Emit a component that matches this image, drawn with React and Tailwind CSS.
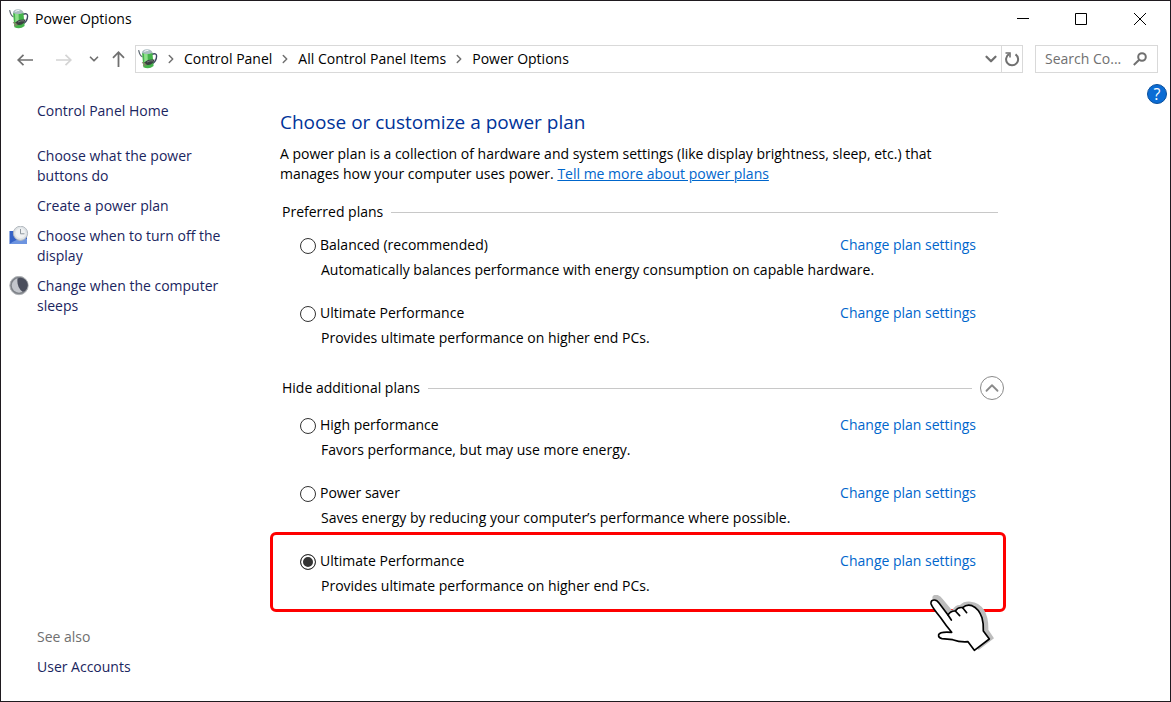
import { useState } from "react";
import { ArrowLeft, ArrowRight, ArrowUp, ChevronDown, ChevronRight, ChevronUp } from "lucide-react";

const preferredPlans = [
  {
    id: "balanced",
    name: "Balanced (recommended)",
    description: "Automatically balances performance with energy consumption on capable hardware.",
  },
  {
    id: "ultimate",
    name: "Ultimate Performance",
    description: "Provides ultimate performance on higher end PCs.",
  },
];

const additionalPlans = [
  {
    id: "high",
    name: "High performance",
    description: "Favors performance, but may use more energy.",
  },
  {
    id: "saver",
    name: "Power saver",
    description: "Saves energy by reducing your computer’s performance where possible.",
  },
  {
    id: "ultimate-2",
    name: "Ultimate Performance",
    description: "Provides ultimate performance on higher end PCs.",
    highlighted: true,
  },
];

const crumbs = ["Control Panel", "All Control Panel Items", "Power Options"];

function PowerIcon() {
  return (
    <svg viewBox="0 0 20 20" className="h-5 w-5 shrink-0" aria-hidden="true">
      <path d="M0.6 1.2 L1.6 4.6 Q2.5 7 4.5 8" stroke="#5b6670" strokeWidth="1.2" fill="none" />
      <path d="M13.5 5.4 Q18.6 3.6 18.6 7 Q18.4 12 14.8 14.5" stroke="#3d4660" strokeWidth="1.4" fill="none" />
      <path d="M4 3.6 Q9 5.6 14.4 3.6 L15.6 17 Q11 20.8 5.4 18.2 Z" fill="#45b34c" />
      <path d="M6 4.8 L9.6 5 L9.8 12 L6.4 13.5 Z" fill="#8ee08a" />
      <path d="M3.8 4 Q4.4 0.3 9 0.3 Q13.8 0.3 14.5 4 Q9 6 3.8 4 Z" fill="#a9bcc0" />
      <path d="M6.4 2.6 Q8 1.2 10.4 1.6" stroke="#eef4f4" strokeWidth="1.1" fill="none" />
      <path d="M6 14 Q9 10 16.6 10.6 Q15.4 15.6 10.4 16 Q7 16.2 6 14 Z" fill="#3a4140" />
      <path d="M9 13 Q12 11.4 15 11.8" stroke="#7d8784" strokeWidth="0.8" fill="none" />
      <path d="M4 13.4 L7.6 15 M5 16.6 L8.4 15.8" stroke="#8d8468" strokeWidth="1.1" />
    </svg>
  );
}

function DisplayIcon() {
  return (
    <svg viewBox="0 0 20 20" className="h-5 w-5 shrink-0" aria-hidden="true">
      <path d="M0.5 5 H18 V18 H0.5 Z" fill="#3562c6" />
      <path d="M0.5 18 Q8 12 18 13 V18 Z" fill="#6d94e0" />
      <circle cx="11.5" cy="7.3" r="7.1" fill="#dfe3e6" stroke="#b2b8be" />
      <circle cx="11.5" cy="7.3" r="5" fill="#eff1f2" />
      <path d="M11.5 3 V7.8 H15.5" stroke="#8f979e" fill="none" />
    </svg>
  );
}

function SleepIcon() {
  return (
    <svg viewBox="0 0 20 20" className="h-5 w-5 shrink-0" aria-hidden="true">
      <circle cx="10" cy="9.5" r="9.2" fill="#7f8389" stroke="#b1b4b8" />
      <circle cx="10" cy="9.5" r="7.2" fill="#c3c6cc" />
      <path d="M8.5 2.6 A7.1 7.1 0 1 1 13.6 15.8 Q7.5 11 8.5 2.6 Z" fill="#4a4e5c" />
    </svg>
  );
}

function HandPointer() {
  return (
    <svg viewBox="27 30 195 171" className="absolute top-11 -right-4.5 h-[57px] w-[65px]" aria-hidden="true">
      <path
        d="M38 42 Q34 30 48 29 Q60 30 68 42 L96 76 Q108 58 120 60 Q132 48 152 50 Q176 52 192 74 Q206 96 205 134 L222 160 L176 195 L160 180 Z"
        fill="#bdbdbd"
      />
      <path
        d="M33 56 Q32 45 43 45 Q51 45 57 54 L84 90 Q92 77 106 78 Q114 65 128 68 Q140 57 156 62 Q176 70 186 98 Q191 116 190 138 L208 162 L163 196 L144 170 Q120 172 98 164 L66 161 Q54 158 56 149 Q60 139 95 142 Q80 124 62 98 Q36 66 33 56 Z"
        fill="#fff"
        stroke="#000"
        strokeWidth="5"
        strokeLinejoin="round"
      />
      <path
        d="M84 90 L94 105 M106 78 L119 92 M128 68 L140 83"
        stroke="#000"
        strokeWidth="5"
        strokeLinecap="round"
      />
    </svg>
  );
}

function Plan({ plan, selected, onSelect }) {
  return (
    <div className="relative">
      <div className="flex items-center justify-between">
        <label className="flex items-center gap-1">
          <input
            type="radio"
            name="plan"
            checked={selected}
            onChange={() => onSelect(plan.id)}
            className="mt-0.5 h-4 w-4 appearance-none rounded-full border border-[#333] bg-white checked:border-[#333] checked:bg-[#333] checked:shadow-[inset_0_0_0_2px_white]"
          />
          {plan.name}
        </label>
        <a href="#" className="text-[#0066cc]">Change plan settings</a>
      </div>
      <p className="mt-[5px] pl-[21px]">{plan.description}</p>
      {plan.highlighted && (
        <>
          <div className="pointer-events-none absolute -inset-x-[30px] -top-[19px] -bottom-4 rounded-md border-3 border-[#fe0000]" />
          <HandPointer />
        </>
      )}
    </div>
  );
}

function TitleBar() {
  return (
    <header className="flex h-9 items-center pl-2">
      <PowerIcon />
      <h1 className="ml-1.5 flex-1">Power Options</h1>
      <div className="flex items-center">
        <button aria-label="Minimize" className="flex w-[58px] justify-center">
          <svg viewBox="0 0 12 12" className="h-3 w-3" stroke="#000" fill="none">
            <path d="M0 5.5 H12" />
          </svg>
        </button>
        <button aria-label="Maximize" className="flex w-[58px] justify-center">
          <svg viewBox="0 0 12 12" className="h-3 w-3" stroke="#000" fill="none">
            <path d="M0.5 0.5 H11.5 V11.5 H0.5 Z" />
          </svg>
        </button>
        <button aria-label="Close" className="flex w-[60px] justify-center">
          <svg viewBox="0 0 12 12" className="h-3 w-3" stroke="#000" fill="none">
            <path d="M0 0 L12 12 M12 0 L0 12" />
          </svg>
        </button>
      </div>
    </header>
  );
}

function AddressBar() {
  return (
    <div className="flex items-center pt-2 pr-3 pl-3.5 text-[#707070]">
      <button aria-label="Back">
        <svg viewBox="0 0 20 20" className="h-5 w-5" stroke="currentColor" strokeWidth="1.7" fill="none">
          <path d="M18 11 H3 M8.5 5.8 L3.2 11 L8.5 16.2" />
        </svg>
      </button>
      <button aria-label="Forward" className="ml-[18px] text-[#d4d4d4]">
        <svg viewBox="0 0 20 20" className="h-5 w-5" stroke="currentColor" strokeWidth="1.7" fill="none">
          <path d="M3 11 H18 M12.5 5.8 L17.8 11 L12.5 16.2" />
        </svg>
      </button>
      <button aria-label="Recent locations" className="ml-3.5">
        <ChevronDown size={14} strokeWidth={3} />
      </button>
      <button aria-label="Up" className="ml-2">
        <svg viewBox="0 0 20 20" className="h-5 w-5" stroke="currentColor" strokeWidth="1.8" fill="none">
          <path d="M9.5 18 V3 M4 8.8 L9.5 3.2 L15 8.8" />
        </svg>
      </button>
      <div className="ml-1.5 flex h-7 flex-1 items-center border border-[#d9d9d9] pl-0.5">
        <PowerIcon />
        <nav className="flex flex-1 items-center text-black">
          {crumbs.map((crumb) => (
            <span key={crumb} className="flex items-center">
              <ChevronRight size={14} strokeWidth={2.5} className="mx-1.5 text-[#707070]" />
              <a href="#">{crumb}</a>
            </span>
          ))}
        </nav>
        <button aria-label="Previous locations" className="px-px">
          <ChevronDown size={18} strokeWidth={3} />
        </button>
        <button aria-label="Refresh" className="flex h-full w-[21px] items-center justify-center border-l border-[#d9d9d9]">
          <svg viewBox="0 0 16 16" className="h-4 w-4" stroke="currentColor" strokeWidth="2" fill="none">
            <path d="M5 3.2 A6 6 0 1 0 11.5 3.4" />
            <path d="M1.5 2 H6 V6.5" strokeWidth="1.6" />
          </svg>
        </button>
      </div>
      <div className="ml-3 flex h-7 w-[123px] items-center border border-[#d9d9d9] pr-2.5 pl-[9px]">
        <input
          type="text"
          aria-label="Search Control Panel"
          placeholder="Search Co..."
          className="min-w-0 flex-1 outline-none placeholder:text-[#707070]"
        />
        <svg viewBox="0 0 14 14" className="h-3.5 w-3.5 shrink-0" stroke="currentColor" strokeWidth="2" fill="none">
          <circle cx="9" cy="5" r="3.8" />
          <path d="M6.2 7.8 L0.8 13" />
        </svg>
      </div>
    </div>
  );
}

function Sidebar() {
  return (
    <aside className="flex w-[279px] shrink-0 flex-col pt-7 pr-12 pb-6 text-[#1a2560]">
      <a href="#" className="pl-9">Control Panel Home</a>
      <ul className="mt-[25px] flex flex-col gap-2.5">
        <li className="pr-6 pl-9"><a href="#">Choose what the power buttons do</a></li>
        <li className="pl-9"><a href="#">Create a power plan</a></li>
        <li className="flex gap-2 pl-2">
          <DisplayIcon />
          <a href="#">Choose when to turn off the display</a>
        </li>
        <li className="flex gap-2 pl-2">
          <SleepIcon />
          <a href="#">Change when the computer sleeps</a>
        </li>
      </ul>
      <div className="mt-auto flex flex-col gap-2.5 pl-9">
        <h2 className="text-[#707070]">See also</h2>
        <a href="#">User Accounts</a>
      </div>
    </aside>
  );
}

function App() {
  const [selected, setSelected] = useState("ultimate-2");
  const [expanded, setExpanded] = useState(true);

  return (
    <div className="flex min-h-screen flex-col border border-[#1f1a1f] bg-white font-['Open_Sans',sans-serif] text-sm/5 text-black">
      <TitleBar />
      <AddressBar />
      <div className="flex flex-1">
        <Sidebar />
        <main className="max-w-[724px] flex-1 pt-[35px]">
          <h2 className="text-[19px]/7 text-[#003399]">Choose or customize a power plan</h2>
          <p className="mt-2 pr-10">
            A power plan is a collection of hardware and system settings (like display brightness, sleep, etc.) that
            manages how your computer uses power.{" "}
            <a href="#" className="text-[#0066cc] underline">Tell me more about power plans</a>
          </p>

          <div className="mt-[18px] mr-1.5 flex items-center gap-2 pl-0.5">
            <h3>Preferred plans</h3>
            <div className="h-px flex-1 bg-[#c8c8c8]" />
          </div>
          <div className="mt-[13px] flex flex-col gap-[23px] pr-7 pl-5">
            {preferredPlans.map((plan) => (
              <Plan key={plan.id} plan={plan} selected={selected === plan.id} onSelect={setSelected} />
            ))}
          </div>

          <div className="mt-7 flex items-center gap-2 pl-0.5">
            <h3>Hide additional plans</h3>
            <div className="h-px flex-1 bg-[#c8c8c8]" />
            <button
              aria-label="Hide additional plans"
              aria-expanded={expanded}
              onClick={() => setExpanded(!expanded)}
              className="flex h-6 w-6 items-center justify-center rounded-full border border-[#8a8a8a] text-[#8a8a8a]"
            >
              <ChevronUp size={22} strokeWidth={2} />
            </button>
          </div>
          {expanded && (
            <div className="mt-[15px] flex flex-col gap-[23px] pr-7 pl-5">
              {additionalPlans.map((plan) => (
                <Plan key={plan.id} plan={plan} selected={selected === plan.id} onSelect={setSelected} />
              ))}
            </div>
          )}
        </main>
        <button
          aria-label="Help"
          className="mt-[11px] mr-[3px] ml-auto h-5 w-5 shrink-0 rounded-full border border-[#0a4f9c] bg-[#0b6cd4] text-base/4 text-white"
        >
          ?
        </button>
      </div>
    </div>
  );
}

export default App;
